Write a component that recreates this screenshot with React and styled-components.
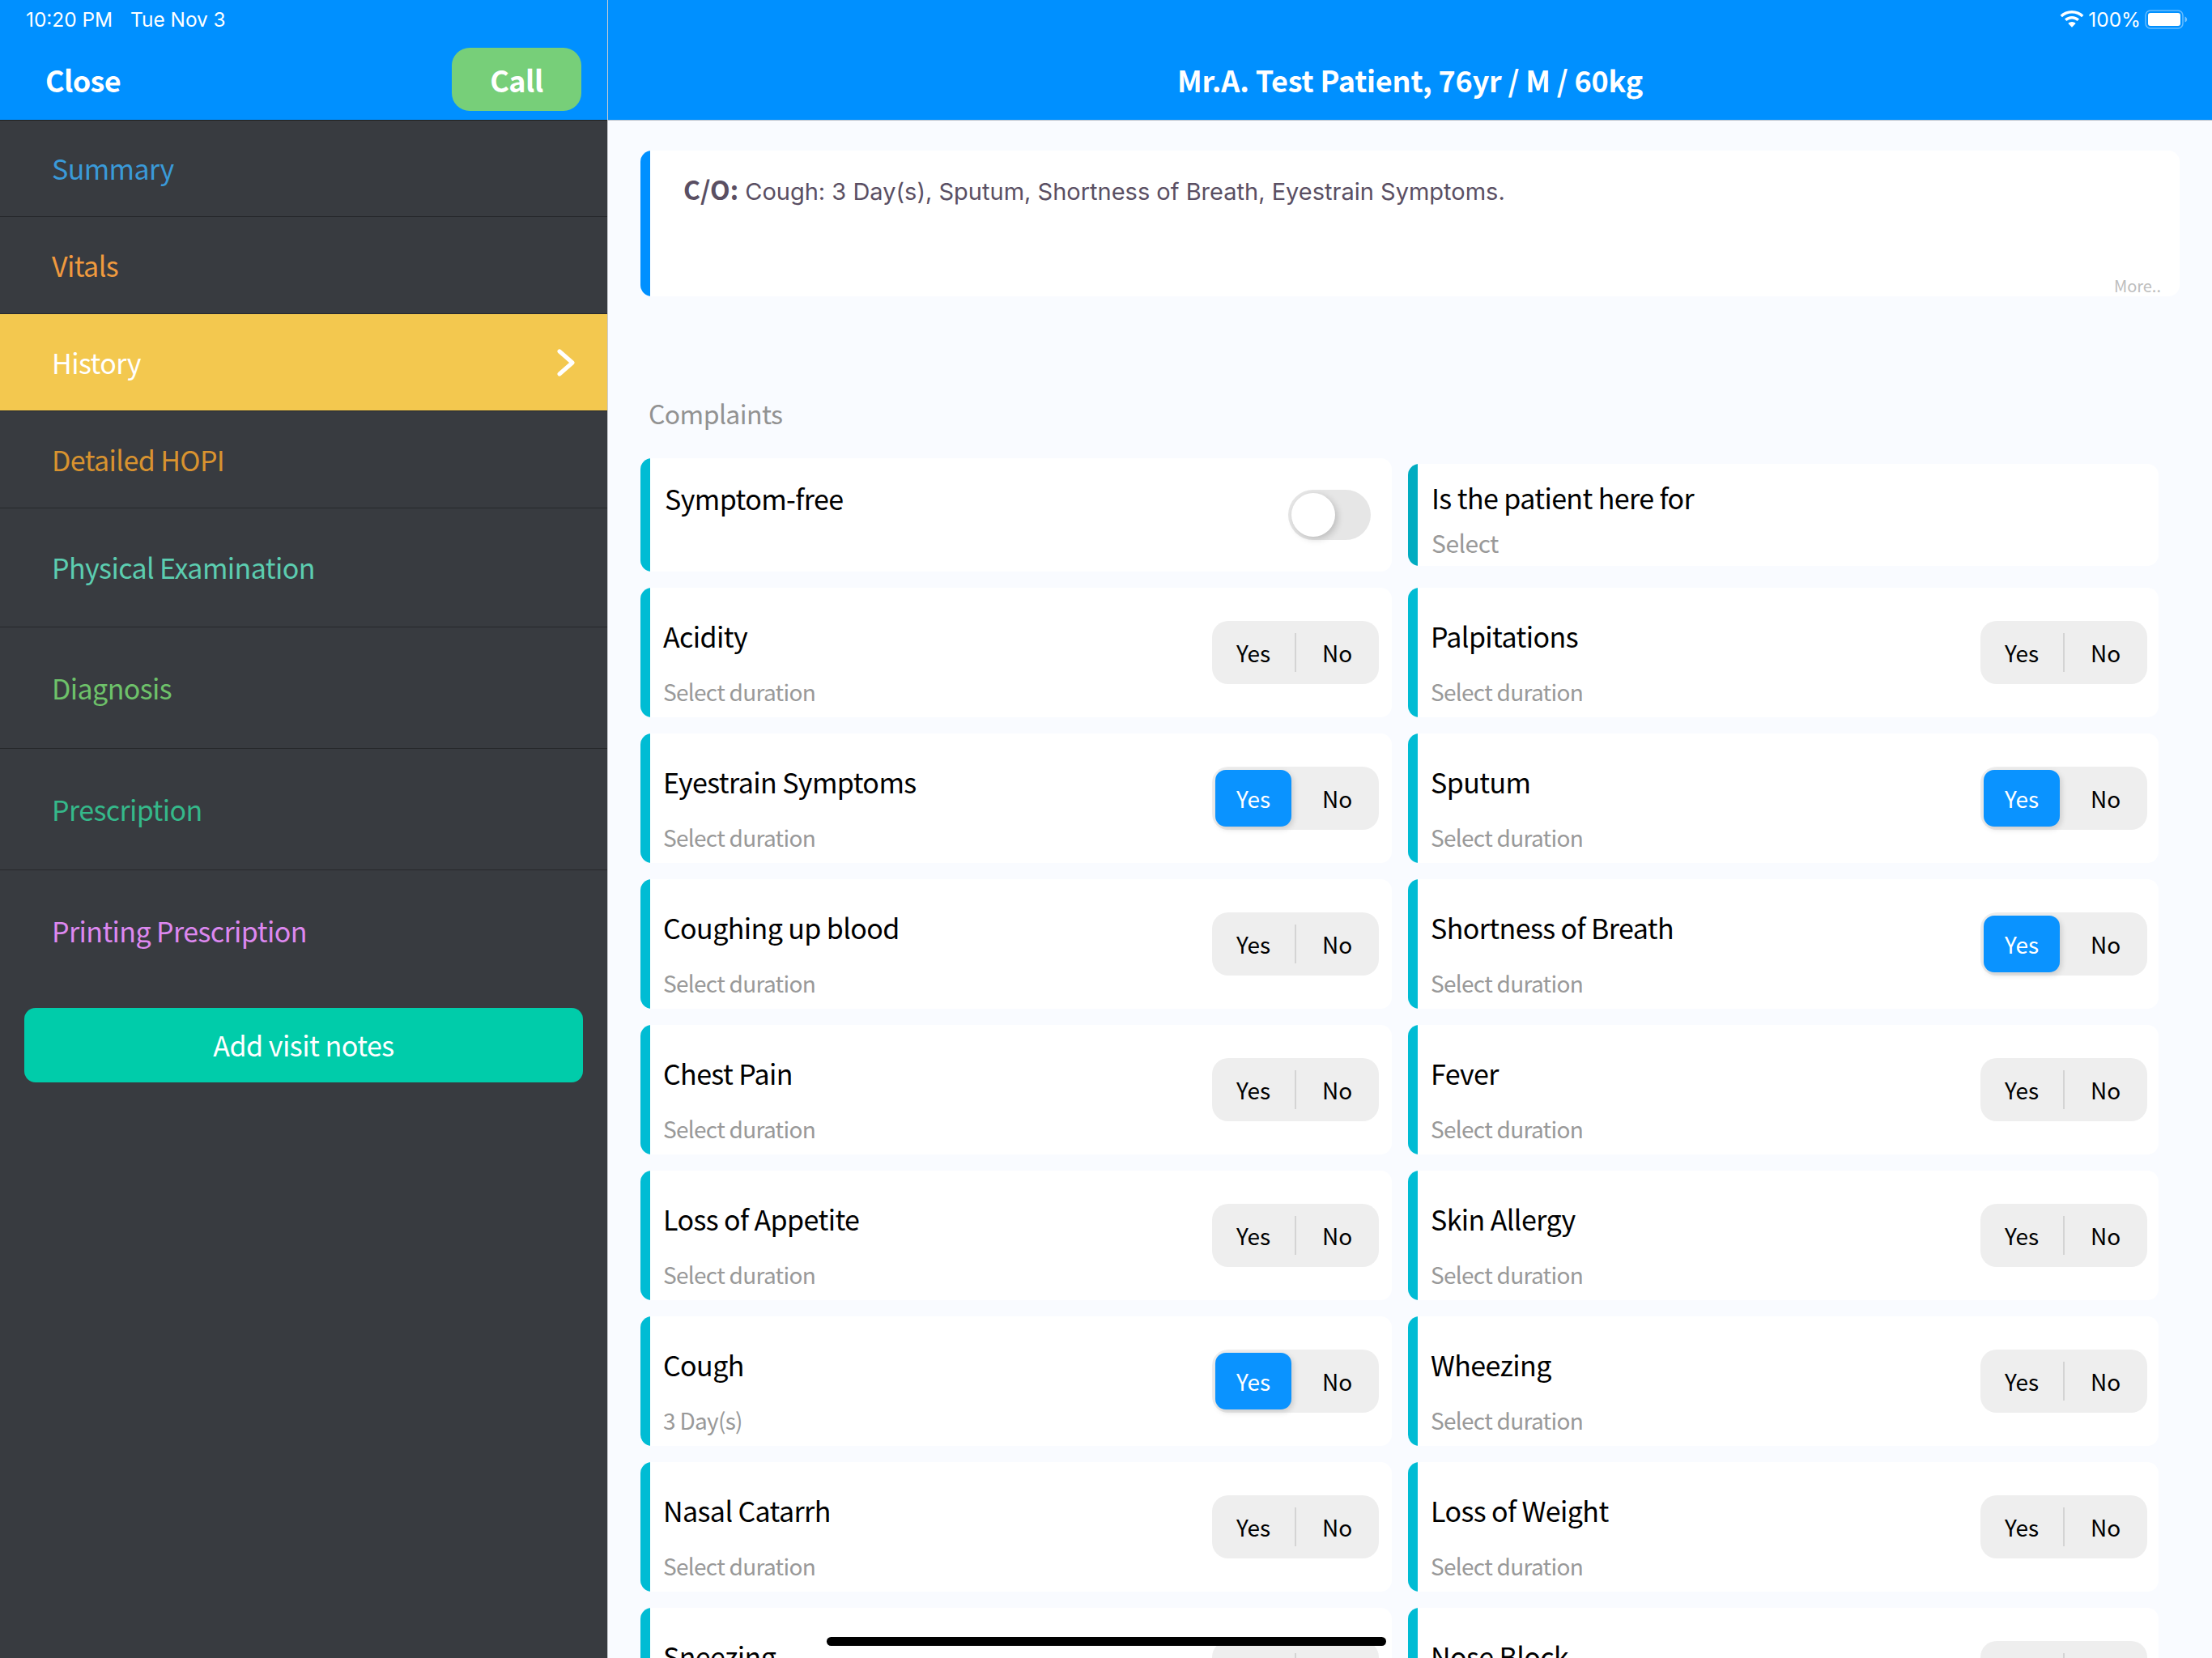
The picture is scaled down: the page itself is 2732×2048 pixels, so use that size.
import React from 'react';
import styled, { createGlobalStyle } from 'styled-components';

const UI_FONT = '"Noto Sans CJK SC", "Noto Sans", sans-serif';
const SYS_FONT = 'Inter, "Liberation Sans", sans-serif';

const GlobalStyle = createGlobalStyle`
  html, body {
    margin: 0;
    padding: 0;
    width: 2732px;
    height: 2048px;
    overflow: hidden;
    background: #f9fbff;
  }
  * {
    box-sizing: border-box;
  }
`;

const Screen = styled.div`
  position: relative;
  display: grid;
  grid-template-columns: 751px 1fr;
  width: 2732px;
  height: 2048px;
  overflow: hidden;
  font-family: ${UI_FONT};
`;

const Sidebar = styled.aside`
  display: flex;
  flex-direction: column;
  background: #383b40;
  border-right: 1px solid #c9ccd1;
`;

const SideHeader = styled.header`
  height: 149px;
  background: #0090ff;
  color: #fff;
  border-bottom: 1px solid #222;
`;

const StatusText = styled.div`
  display: flex;
  gap: 22px;
  padding: 9px 0 0 32px;
  height: 48px;
  font-family: ${SYS_FONT};
  font-size: 24.4px;
  line-height: 30px;
`;

const SideToolbar = styled.div`
  display: flex;
  align-items: center;
  justify-content: space-between;
  padding: 11px 32px 0 56px;
`;

const Close = styled.span`
  font-size: 36px;
  font-weight: 700;
  line-height: 50px;
  letter-spacing: -0.6px;
`;

const CallButton = styled.button`
  width: 160px;
  height: 78px;
  padding: 0;
  border: none;
  border-radius: 22px;
  background: #77cf79;
  color: #fff;
  font-family: inherit;
  font-size: 36px;
  font-weight: 700;
  letter-spacing: -0.5px;
`;

const NavItem = styled.div`
  display: flex;
  align-items: center;
  justify-content: space-between;
  height: ${(p) => p.$height}px;
  padding: 0 39px 0 64px;
  border-bottom: 1px solid #26282b;
  background: ${(p) => (p.$active ? '#f3c84f' : 'transparent')};
  color: ${(p) => p.$color};
  font-size: 34px;
  line-height: 46px;
  letter-spacing: -0.6px;

  &:last-of-type {
    border-bottom: none;
  }
`;

const AddNotes = styled.button`
  align-self: center;
  width: 690px;
  height: 92px;
  margin-top: 20px;
  padding: 0 0 2px;
  border: none;
  border-radius: 14px;
  background: #00ccaa;
  color: #fff;
  font-family: inherit;
  font-size: 34px;
  letter-spacing: -0.5px;
`;

const Main = styled.main`
  display: flex;
  flex-direction: column;
  min-width: 0;
`;

const MainHeader = styled.header`
  flex: none;
  height: 149px;
  background: #0090ff;
  color: #fff;
  border-bottom: 1px solid #bcc3cc;
`;

const StatusRight = styled.div`
  display: flex;
  align-items: center;
  justify-content: flex-end;
  gap: 5px;
  height: 48px;
  padding: 0 29px 0 0;
  font-family: ${SYS_FONT};
  font-size: 24.4px;
`;

const PatientTitle = styled.h1`
  margin: 0;
  padding-top: 20px;
  text-align: center;
  font-size: 36px;
  font-weight: 700;
  line-height: 60px;
  letter-spacing: -0.2px;
`;

const Content = styled.div`
  flex: 1;
  padding: 37px 40px 0;
  background: #f9fbff;
`;

const Accent = styled.div`
  flex: none;
  width: 12px;
  background: ${(p) => p.$color};
`;

const SummaryCard = styled.section`
  display: flex;
  height: 180px;
  border-radius: 14px;
  overflow: hidden;
  background: #fff;
`;

const SummaryBody = styled.div`
  flex: 1;
  display: flex;
  flex-direction: column;
  justify-content: space-between;
  padding: 25px 23px 0 41px;
`;

const SummaryText = styled.p`
  margin: 0;
  color: #5a4f63;
  font-family: ${SYS_FONT};
  font-size: 29px;
  line-height: 44px;
`;

const SummaryLabel = styled.strong`
  font-family: ${UI_FONT};
  font-size: 32px;
  font-weight: 700;
`;

const More = styled.span`
  align-self: flex-end;
  color: #bdbdbd;
  font-size: 20px;
  line-height: 26px;
`;

const SectionTitle = styled.h2`
  margin: 0;
  padding: 122px 0 34px 10px;
  color: #929292;
  font-size: 32px;
  font-weight: 400;
  line-height: 44px;
  letter-spacing: -0.6px;
`;

const Grid = styled.div`
  display: grid;
  grid-template-columns: 928px 927px;
  grid-auto-rows: 160px;
  grid-template-rows: 140px;
  column-gap: 20px;
  row-gap: 20px;
  align-items: center;
`;

const Card = styled.div`
  display: flex;
  height: ${(p) => p.$height}px;
  border-radius: 14px;
  overflow: hidden;
  background: #fff;
`;

const CardBody = styled.div`
  flex: 1;
  display: flex;
  flex-direction: column;
  padding: ${(p) => p.$top}px 0 0 ${(p) => p.$left}px;
`;

const Title = styled.div`
  color: #000;
  font-size: 34px;
  line-height: 44px;
  letter-spacing: -0.6px;
`;

const Duration = styled.div`
  margin-top: 26px;
  color: #999;
  font-size: 28px;
  line-height: 40px;
  letter-spacing: -0.7px;
`;

const SelectHint = styled.div`
  margin-top: 11px;
  color: #999;
  font-size: 30px;
  line-height: 44px;
  letter-spacing: -0.5px;
`;

const Toggle = styled.div`
  align-self: center;
  flex: none;
  display: flex;
  align-items: center;
  width: 102px;
  height: 62px;
  margin-right: 26px;
  padding: 0 4px;
  border-radius: 31px;
  background: #e6e6e6;
`;

const Knob = styled.div`
  width: 54px;
  height: 54px;
  border-radius: 50%;
  background: #fff;
  box-shadow: 3px 3px 8px rgba(0, 0, 0, 0.18);
`;

const Segment = styled.div`
  align-self: center;
  flex: none;
  position: relative;
  display: grid;
  grid-template-columns: 103px 103px;
  align-items: center;
  width: 206px;
  height: 78px;
  margin-right: ${(p) => p.$inset}px;
  border-radius: 20px;
  background: #eeeeee;
  font-size: 28px;
`;

const Divider = styled.div`
  position: absolute;
  left: 102px;
  top: 15px;
  width: 2px;
  height: 48px;
  background: #d4d4d4;
`;

const SegmentOption = styled.div`
  display: flex;
  align-items: center;
  justify-content: center;
  z-index: 1;
  height: 70px;
  margin-left: ${(p) => (p.$side === 'yes' ? '4px' : '0')};
  margin-right: ${(p) => (p.$side === 'yes' ? '5px' : '0')};
  border-radius: 13px;
  background: ${(p) => (p.$selected ? '#0a93ff' : 'transparent')};
  color: ${(p) => (p.$selected ? '#fff' : '#000')};
  box-shadow: ${(p) => (p.$selected ? '2px 3px 7px rgba(0, 0, 0, 0.15)' : 'none')};
`;

const HomeBar = styled.div`
  position: absolute;
  left: 1021px;
  top: 2022px;
  width: 691px;
  height: 11px;
  border-radius: 6px;
  background: #000;
`;

const Chevron = () => (
  <svg width="24" height="34" viewBox="0 0 24 34" fill="none">
    <path d="M4 3 L20 17 L4 31" stroke="#fff" strokeWidth="5" strokeLinecap="round" strokeLinejoin="round" />
  </svg>
);

const Wifi = () => (
  <svg width="30" height="22" viewBox="0 0 30 22" fill="#fff">
    <path d="M15 0C9.3 0 4.3 2.2.6 5.8L3 8.3C6.1 5.3 10.3 3.5 15 3.5s8.9 1.8 12 4.8l2.4-2.5C25.700 2.2 20.700 0 15 0Z" />
    <path d="M15 7c-3.400 0-6.600 1.300-9 3.600l2.500 2.500C10.200 11.500 12.500 10.500 15 10.500s4.800 1 6.500 2.600l2.500-2.500C21.600 8.300 18.400 7 15 7Z" />
    <path d="M15 14c-1.800 0-3.400.7-4.600 1.900L15 20.800l4.600-4.900C18.400 14.700 16.800 14 15 14Z" />
  </svg>
);

const Battery = () => (
  <svg width="54" height="24" viewBox="0 0 54 24" fill="none">
    <rect x="1" y="1" width="46" height="22" rx="6" stroke="#fff" strokeOpacity="0.4" strokeWidth="1.500" />
    <rect x="4" y="4" width="40" height="16" rx="3" fill="#fff" />
    <path d="M49.500 8.500c1.600.5 2.700 2 2.700 3.500s-1.100 3-2.700 3.500Z" fill="#fff" fillOpacity="0.45" />
  </svg>
);

const navItems = [
  { label: 'Summary', color: '#3a9ad9', height: 119 },
  { label: 'Vitals', color: '#f09a3e', height: 120 },
  { label: 'History', color: '#fff', height: 120, active: true },
  { label: 'Detailed HOPI', color: '#d9932f', height: 120 },
  { label: 'Physical Examination', color: '#5ccdb0', height: 147 },
  { label: 'Diagnosis', color: '#6ec26a', height: 150 },
  { label: 'Prescription', color: '#35b88a', height: 150 },
  { label: 'Printing Prescription', color: '#dd88f0', height: 150 },
];

const complaints = [
  ['Acidity', false],
  ['Palpitations', false],
  ['Eyestrain Symptoms', true],
  ['Sputum', true],
  ['Coughing up blood', false],
  ['Shortness of Breath', true],
  ['Chest Pain', false],
  ['Fever', false],
  ['Loss of Appetite', false],
  ['Skin Allergy', false],
  ['Cough', true, '3 Day(s)'],
  ['Wheezing', false],
  ['Nasal Catarrh', false],
  ['Loss of Weight', false],
  ['Sneezing', false],
  ['Nose Block', false],
];

const ComplaintCard = ({ name, yes, duration, inset }) => (
  <Card $height={160}>
    <Accent $color="#00bcd4" />
    <CardBody $top={38} $left={16}>
      <Title>{name}</Title>
      <Duration>{duration || 'Select duration'}</Duration>
    </CardBody>
    <Segment $inset={inset}>
      {!yes && <Divider />}
      <SegmentOption $side="yes" $selected={yes}>Yes</SegmentOption>
      <SegmentOption $side="no">No</SegmentOption>
    </Segment>
  </Card>
);

export default function App() {
  return (
    <Screen>
      <GlobalStyle />
      <Sidebar>
        <SideHeader>
          <StatusText>
            <span>10:20 PM</span>
            <span>Tue Nov 3</span>
          </StatusText>
          <SideToolbar>
            <Close>Close</Close>
            <CallButton>Call</CallButton>
          </SideToolbar>
        </SideHeader>
        <nav>
          {navItems.map((item) => (
            <NavItem key={item.label} $color={item.color} $height={item.height} $active={item.active}>
              {item.label}
              {item.active && <Chevron />}
            </NavItem>
          ))}
        </nav>
        <AddNotes>Add visit notes</AddNotes>
      </Sidebar>
      <Main>
        <MainHeader>
          <StatusRight>
            <Wifi />
            <span>100%</span>
            <Battery />
          </StatusRight>
          <PatientTitle>Mr.A. Test Patient, 76yr / M / 60kg</PatientTitle>
        </MainHeader>
        <Content>
          <SummaryCard>
            <Accent $color="#0090ff" />
            <SummaryBody>
              <SummaryText>
                <SummaryLabel>C/O:</SummaryLabel> Cough: 3 Day(s), Sputum, Shortness of Breath, Eyestrain Symptoms.
              </SummaryText>
              <More>More..</More>
            </SummaryBody>
          </SummaryCard>
          <SectionTitle>Complaints</SectionTitle>
          <Grid>
            <Card $height={140}>
              <Accent $color="#00bcd4" />
              <CardBody $top={28} $left={18}>
                <Title>Symptom-free</Title>
              </CardBody>
              <Toggle>
                <Knob />
              </Toggle>
            </Card>
            <Card $height={126}>
              <Accent $color="#00acc1" />
              <CardBody $top={20} $left={17}>
                <Title>Is the patient here for</Title>
                <SelectHint>Select</SelectHint>
              </CardBody>
            </Card>
            {complaints.map(([name, yes, duration], i) => (
              <ComplaintCard key={name} name={name} yes={yes} duration={duration} inset={i % 2 ? 14 : 16} />
            ))}
          </Grid>
        </Content>
      </Main>
      <HomeBar />
    </Screen>
  );
}
